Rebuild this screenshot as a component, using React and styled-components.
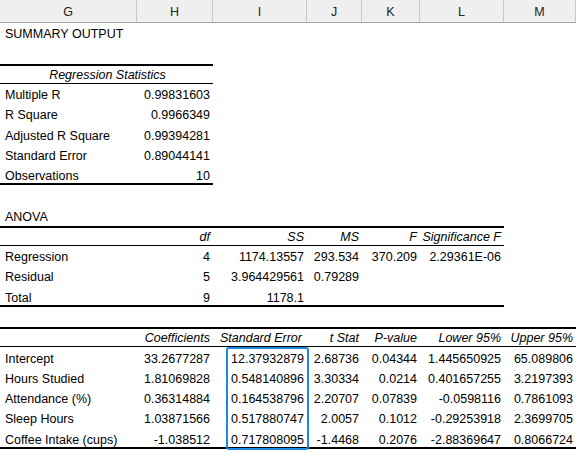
import React from "react";
import styled, { createGlobalStyle, css } from "styled-components";

const Global = createGlobalStyle`
  html, body { margin: 0; padding: 0; background: #fff; }
  body { font-family: "Liberation Sans", Arial, sans-serif; }
`;

const COLS = "137px 76px 94px 55px 58px 84px 72px";
const ROW_H = 20.27;

const Sheet = styled.div`
  position: relative;
  width: 576px;
  height: 457px;
  overflow: hidden;
  background: #fff;
`;

const HeaderBar = styled.div`
  display: grid;
  grid-template-columns: ${COLS};
  height: 23px;
  background: #efefef;
  border-bottom: 1px solid #a6a6a6;
  box-sizing: border-box;
`;

const ColHead = styled.div`
  display: flex;
  align-items: center;
  justify-content: center;
  font-size: 12.5px;
  color: #222;
  border-right: 1px solid #c8c8c8;
  padding-top: 1px;
`;

const Grid = styled.div`
  display: grid;
  grid-template-columns: ${COLS};
  grid-auto-rows: ${ROW_H}px;
`;

const Cell = styled.div`
  display: flex;
  align-items: flex-end;
  justify-content: ${(p) => (p.$align === "right" ? "flex-end" : p.$align === "center" ? "center" : "flex-start")};
  padding: 0 3px 2px 5px;
  font-size: 12.5px;
  color: #000;
  white-space: nowrap;
  overflow: visible;
  font-style: ${(p) => (p.$italic ? "italic" : "normal")};
  grid-column: ${(p) => p.$span || "auto"};
  ${(p) => {
    const s = [];
    if (p.$top === "thick") s.push("inset 0 2px 0 #000");
    if (p.$top === "thin") s.push("inset 0 1px 0 #000");
    if (p.$bottom === "thick") s.push("inset 0 -2px 0 #000");
    if (p.$bottom === "thin") s.push("inset 0 -1px 0 #000");
    return s.length ? css`box-shadow: ${s.join(",")};` : "";
  }}
`;

const Selection = styled.div`
  position: absolute;
  left: 226px;
  width: 83px;
  top: ${23 + 16 * ROW_H}px;
  height: ${5 * ROW_H + 1}px;
  border: 2px solid #1e88e5;
  border-radius: 3px;
  box-sizing: border-box;
  pointer-events: none;
`;

const letters = ["G", "H", "I", "J", "K", "L", "M"];

// row: array of 7 entries (string or null), opts
const rows = [
  { c: ["SUMMARY OUTPUT"] },
  { c: [] },
  { c: [["Regression Statistics", "center", true, "1 / 3"]], w: 2, top: "thick", bottom: "thin" },
  { c: ["Multiple R", "0.99831603"], w: 2 },
  { c: ["R Square", "0.9966349"], w: 2 },
  { c: ["Adjusted R Square", "0.99394281"], w: 2 },
  { c: ["Standard Error", "0.89044141"], w: 2 },
  { c: ["Observations", "10"], w: 2, bottom: "thick" },
  { c: [] },
  { c: ["ANOVA"] },
  { c: ["", "df", "SS", "MS", "F", "Significance F"], w: 6, top: "thick", bottom: "thin", italic: true },
  { c: ["Regression", "4", "1174.13557", "293.534", "370.209", "2.29361E-06"], w: 6 },
  { c: ["Residual", "5", "3.964429561", "0.79289"], w: 6 },
  { c: ["Total", "9", "1178.1"], w: 6, bottom: "thick" },
  { c: [] },
  { c: ["", "Coefficients", ["Standard Error", "center", true], "t Stat", "P-value", "Lower 95%", "Upper 95%"], w: 7, top: "thick", bottom: "thin", italic: true },
  { c: ["Intercept", "33.2677287", "12.37932879", "2.68736", "0.04344", "1.445650925", "65.089806"], w: 7 },
  { c: ["Hours Studied", "1.81069828", "0.548140896", "3.30334", "0.0214", "0.401657255", "3.2197393"], w: 7 },
  { c: ["Attendance (%)", "0.36314884", "0.164538796", "2.20707", "0.07839", "-0.0598116", "0.7861093"], w: 7 },
  { c: ["Sleep Hours", "1.03871566", "0.517880747", "2.0057", "0.1012", "-0.29253918", "2.3699705"], w: 7 },
  { c: ["Coffee Intake (cups)", "-1.038512", "0.717808095", "-1.4468", "0.2076", "-2.88369647", "0.8066724"], w: 7, bottom: "thick" },
  { c: [] },
];

function renderRow(r, ri) {
  const cells = [];
  let col = 0;
  r.c.forEach((v, i) => {
    let text = v, align = i === 0 ? "left" : "right", italic = r.italic && i > 0, span;
    if (Array.isArray(v)) {
      [text, align, italic, span] = v;
    }
    if (r.italic && i > 0 && !Array.isArray(v)) align = r.c === rows[10].c && i === 1 ? "right" : "right";
    const n = span ? 2 : 1;
    const inTable = col < (r.w || 0);
    cells.push(
      <Cell key={i} $align={align} $italic={italic} $span={span}
        $top={inTable ? r.top : undefined} $bottom={inTable ? r.bottom : undefined}>
        {text}
      </Cell>
    );
    col += n;
  });
  while (col < 7) {
    const inTable = col < (r.w || 0);
    cells.push(<Cell key={"e" + col} $top={inTable ? r.top : undefined} $bottom={inTable ? r.bottom : undefined} />);
    col++;
  }
  return <React.Fragment key={ri}>{cells}</React.Fragment>;
}

export default function App() {
  return (
    <Sheet>
      <Global />
      <HeaderBar>
        {letters.map((l) => <ColHead key={l}>{l}</ColHead>)}
      </HeaderBar>
      <Grid>{rows.map(renderRow)}</Grid>
      <Selection />
    </Sheet>
  );
}
